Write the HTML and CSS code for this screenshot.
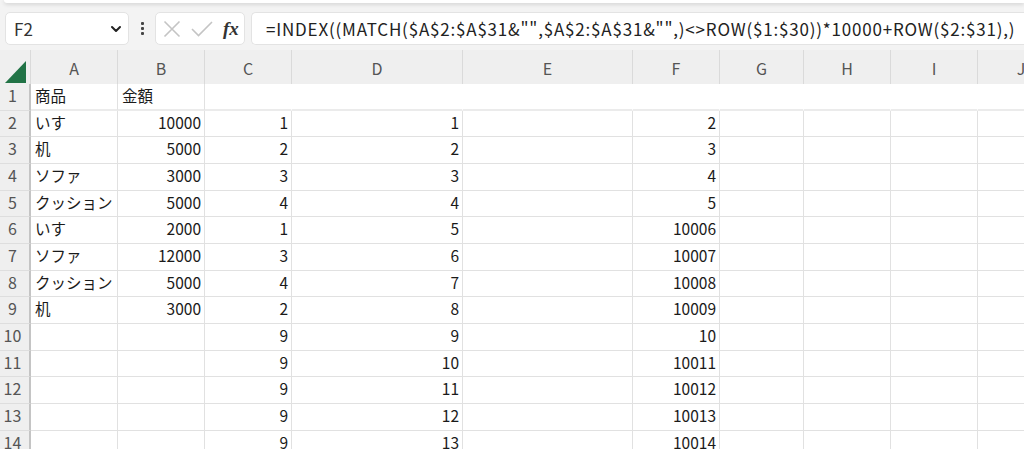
FILE: index.html
```html
<!DOCTYPE html>
<html lang="ja">
<head>
<meta charset="utf-8">
<title>Sheet</title>
<link rel="stylesheet" href="styles.css">
</head>
<body>
<div class="app">
  <div class="ribbon-edge"></div>
  <div class="fbar">
    <div class="namebox">
      <span class="ref">F2</span>
      <svg class="chev" width="12" height="8" viewBox="0 0 12 8"><path d="M2 2 L6 6 L10 2" fill="none" stroke="#222" stroke-width="2" stroke-linecap="round" stroke-linejoin="round"/></svg>
    </div>
    <div class="grip"><i></i><i></i><i></i></div>
    <div class="fxbox">
      <svg class="ico" width="18" height="18" viewBox="0 0 18 18"><path d="M1.5 1.5 L16.5 16.5 M16.5 1.5 L1.5 16.5" stroke="#c4c4c4" stroke-width="1.6" fill="none"/></svg>
      <svg class="ico" width="22" height="16" viewBox="0 0 22 16"><path d="M1 8 L7.5 14.5 L21 1" stroke="#c4c4c4" stroke-width="1.6" fill="none"/></svg>
      <span class="fx">fx</span>
    </div>
    <div class="formula">=INDEX((MATCH($A$2:$A$31&amp;"",$A$2:$A$31&amp;"",)&lt;&gt;ROW($1:$30))*10000+ROW($2:$31),)</div>
  </div>
  <div class="sheet">
    <div class="row head">
      <div class="corner"><svg width="22" height="23" viewBox="0 0 22 23"><path d="M0 22 L21 22 L21 0 Z" fill="#217346"/></svg></div>
      <div class="ch">A</div><div class="ch">B</div><div class="ch">C</div><div class="ch">D</div><div class="ch">E</div><div class="ch">F</div><div class="ch">G</div><div class="ch">H</div><div class="ch">I</div><div class="ch">J</div>
    </div>
    <div class="row r1">
      <div class="rh">1</div><div class="c t">商品</div><div class="c t">金額</div><div class="c w"></div><div class="c w"></div><div class="c w"></div><div class="c w"></div><div class="c w"></div><div class="c w"></div><div class="c w"></div><div class="c w"></div>
    </div>
    <div class="row s">
      <div class="rh">2</div><div class="c t">いす</div><div class="c n">10000</div><div class="c n">1</div><div class="c n">1</div><div class="c"></div><div class="c n">2</div><div class="c"></div><div class="c"></div><div class="c"></div><div class="c"></div>
    </div>
    <div class="row">
      <div class="rh">3</div><div class="c t">机</div><div class="c n">5000</div><div class="c n">2</div><div class="c n">2</div><div class="c"></div><div class="c n">3</div><div class="c"></div><div class="c"></div><div class="c"></div><div class="c"></div>
    </div>
    <div class="row">
      <div class="rh">4</div><div class="c t">ソファ</div><div class="c n">3000</div><div class="c n">3</div><div class="c n">3</div><div class="c"></div><div class="c n">4</div><div class="c"></div><div class="c"></div><div class="c"></div><div class="c"></div>
    </div>
    <div class="row s">
      <div class="rh">5</div><div class="c t">クッション</div><div class="c n">5000</div><div class="c n">4</div><div class="c n">4</div><div class="c"></div><div class="c n">5</div><div class="c"></div><div class="c"></div><div class="c"></div><div class="c"></div>
    </div>
    <div class="row">
      <div class="rh">6</div><div class="c t">いす</div><div class="c n">2000</div><div class="c n">1</div><div class="c n">5</div><div class="c"></div><div class="c n">10006</div><div class="c"></div><div class="c"></div><div class="c"></div><div class="c"></div>
    </div>
    <div class="row">
      <div class="rh">7</div><div class="c t">ソファ</div><div class="c n">12000</div><div class="c n">3</div><div class="c n">6</div><div class="c"></div><div class="c n">10007</div><div class="c"></div><div class="c"></div><div class="c"></div><div class="c"></div>
    </div>
    <div class="row s">
      <div class="rh">8</div><div class="c t">クッション</div><div class="c n">5000</div><div class="c n">4</div><div class="c n">7</div><div class="c"></div><div class="c n">10008</div><div class="c"></div><div class="c"></div><div class="c"></div><div class="c"></div>
    </div>
    <div class="row">
      <div class="rh">9</div><div class="c t">机</div><div class="c n">3000</div><div class="c n">2</div><div class="c n">8</div><div class="c"></div><div class="c n">10009</div><div class="c"></div><div class="c"></div><div class="c"></div><div class="c"></div>
    </div>
    <div class="row">
      <div class="rh">10</div><div class="c"></div><div class="c"></div><div class="c n">9</div><div class="c n">9</div><div class="c"></div><div class="c n">10</div><div class="c"></div><div class="c"></div><div class="c"></div><div class="c"></div>
    </div>
    <div class="row s">
      <div class="rh">11</div><div class="c"></div><div class="c"></div><div class="c n">9</div><div class="c n">10</div><div class="c"></div><div class="c n">10011</div><div class="c"></div><div class="c"></div><div class="c"></div><div class="c"></div>
    </div>
    <div class="row">
      <div class="rh">12</div><div class="c"></div><div class="c"></div><div class="c n">9</div><div class="c n">11</div><div class="c"></div><div class="c n">10012</div><div class="c"></div><div class="c"></div><div class="c"></div><div class="c"></div>
    </div>
    <div class="row">
      <div class="rh">13</div><div class="c"></div><div class="c"></div><div class="c n">9</div><div class="c n">12</div><div class="c"></div><div class="c n">10013</div><div class="c"></div><div class="c"></div><div class="c"></div><div class="c"></div>
    </div>
    <div class="row s">
      <div class="rh">14</div><div class="c"></div><div class="c"></div><div class="c n">9</div><div class="c n">13</div><div class="c"></div><div class="c n">10014</div><div class="c"></div><div class="c"></div><div class="c"></div><div class="c"></div>
    </div>
  </div>
</div>
</body>
</html>
```

FILE: styles.css
```css
* { box-sizing: border-box; }
html, body { margin: 0; padding: 0; }
body {
  width: 1024px;
  height: 449px;
  overflow: hidden;
  background: #f3f3f3;
  font-family: "Noto Sans CJK JP", "Noto Sans", sans-serif;
}
.app { width: 1024px; height: 449px; overflow: hidden; }

.ribbon-edge {
  height: 3px;
  margin-left: 4px;
  background: #fff;
  border-radius: 0 0 0 6px;
  box-shadow: 0 1px 4px rgba(0,0,0,0.18);
}

.fbar {
  display: flex;
  align-items: center;
  height: 33px;
  margin-top: 9px;
  padding-left: 5px;
}
.namebox {
  width: 124px;
  height: 33px;
  background: #fff;
  border: 1px solid #e3e3e3;
  border-radius: 5px;
  display: flex;
  align-items: center;
  justify-content: space-between;
  padding: 0 6px 0 8px;
  flex: none;
}
.ref { font-size: 17px; color: #333; line-height: 1; }
.chev { display: block; }
.grip {
  width: 26px;
  display: flex;
  flex-direction: column;
  align-items: center;
  gap: 2px;
  flex: none;
}
.grip i { display: block; width: 3px; height: 3px; background: #444; border-radius: 1px; }
.fxbox {
  width: 90px;
  height: 33px;
  background: #fff;
  border: 1px solid #e3e3e3;
  border-radius: 5px;
  display: flex;
  align-items: center;
  padding-left: 7px;
  gap: 10px;
  flex: none;
}
.ico { display: block; }
.fx {
  font-family: "Liberation Serif", "DejaVu Serif", serif;
  font-style: italic;
  font-weight: bold;
  font-size: 19px;
  color: #333;
  line-height: 1;
}
.formula {
  margin-left: 6px;
  flex: 1;
  height: 33px;
  background: #fff;
  border: 1px solid #e3e3e3;
  border-right: none;
  border-radius: 5px 0 0 5px;
  padding-left: 14px;
  font-size: 17px;
  letter-spacing: 0.8px;
  line-height: 31px;
  color: #222;
  white-space: nowrap;
  overflow: hidden;
}

.sheet { margin-top: 5px; }
.row {
  display: grid;
  grid-template-columns: 31px 87px 87px 87px 171px 170px 87px 84px 87px 87px 87px;
  height: 27px;
}
.row.s { height: 26px; }
.row.head { height: 34px; }

.corner {
  background: #efefef;
  border-bottom: 2px solid #bdbdbd;
  border-right: 1px solid #dadada;
  display: flex;
  align-items: flex-end;
  justify-content: flex-end;
  padding: 0 3px 2px 0;
}
.corner svg { display: block; }
.ch {
  background: #efefef;
  border-bottom: 2px solid #bdbdbd;
  border-right: 1px solid #dadada;
  color: #555;
  font-size: 16px;
  text-align: center;
  line-height: 36px;
}
.rh {
  background: #efefef;
  border-right: 2px solid #c4c4c4;
  border-bottom: 1px solid #dedede;
  color: #555;
  font-size: 16px;
  text-align: center;
  padding-right: 4px;
  line-height: 22px;
}
.c {
  background: #fff;
  border-right: 1px solid #e1e1e1;
  border-bottom: 1px solid #e1e1e1;
  font-size: 15.5px;
  color: #1a1a1a;
  line-height: 22px;
  white-space: nowrap;
  overflow: hidden;
}
.c.t { padding-left: 4px; }
.c.n { text-align: right; padding-right: 3px; }
.c.w { border-right-color: #fff; }
.r1 .c { border-bottom: 2px solid #ebebeb; }
```
